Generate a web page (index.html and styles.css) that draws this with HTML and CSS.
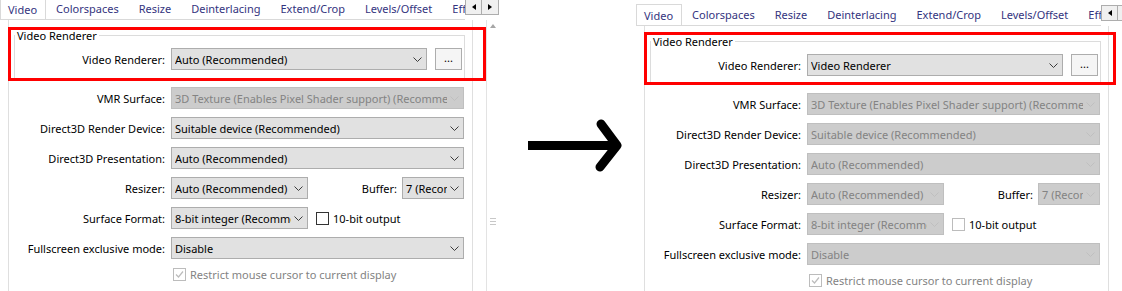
FILE: index.html
```html
<!DOCTYPE html>
<html>
    <head>
        <meta charset="utf-8">
        <title>Video options</title>
        <link rel="stylesheet" href="styles.css">
    </head>
    <body>
    <div class="page">

        <!-- before -->
        <div class="panel panel-left">
            <div class="tabbar">
                <div class="tabs">
                    <div class="tab active">Video</div>
                    <div class="tab">Colorspaces</div>
                    <div class="tab">Resize</div>
                    <div class="tab">Deinterlacing</div>
                    <div class="tab">Extend/Crop</div>
                    <div class="tab">Levels/Offset</div>
                    <div class="tab">Effects</div>
                </div>
                <div class="tab-scroll">
                    <div class="tab-btn"><span class="tri-left"></span></div>
                    <div class="tab-btn"><span class="tri-right"></span></div>
                </div>
            </div>
            <div class="body">
                <div class="content">
                    <fieldset class="group">
                        <legend>Video Renderer</legend>
                        <div class="row row-group">
                            <div class="label label-group">Video Renderer:</div>
                            <div class="combo combo-renderer"><span class="value">Auto (Recommended)</span><svg class="chev" width="9" height="5" viewBox="0 0 9 5"><path d="M0.5 0.5 L4.5 4.5 L8.5 0.5" fill="none" stroke="#3c3c3c"/></svg></div>
                            <div class="dots">...</div>
                        </div>
                    </fieldset>
                    <div class="row">
                        <div class="label">VMR Surface:</div>
                        <div class="combo wide disabled"><span class="value">3D Texture (Enables Pixel Shader support) (Recommended)</span><svg class="chev" width="9" height="5" viewBox="0 0 9 5"><path d="M0.5 0.5 L4.5 4.5 L8.5 0.5" fill="none" stroke="#bfbfbf"/></svg></div>
                    </div>
                    <div class="row">
                        <div class="label">Direct3D Render Device:</div>
                        <div class="combo wide"><span class="value">Suitable device (Recommended)</span><svg class="chev" width="9" height="5" viewBox="0 0 9 5"><path d="M0.5 0.5 L4.5 4.5 L8.5 0.5" fill="none" stroke="#3c3c3c"/></svg></div>
                    </div>
                    <div class="row">
                        <div class="label">Direct3D Presentation:</div>
                        <div class="combo wide"><span class="value">Auto (Recommended)</span><svg class="chev" width="9" height="5" viewBox="0 0 9 5"><path d="M0.5 0.5 L4.5 4.5 L8.5 0.5" fill="none" stroke="#3c3c3c"/></svg></div>
                    </div>
                    <div class="row">
                        <div class="label">Resizer:</div>
                        <div class="combo short"><span class="value">Auto (Recommended)</span><svg class="chev" width="9" height="5" viewBox="0 0 9 5"><path d="M0.5 0.5 L4.5 4.5 L8.5 0.5" fill="none" stroke="#3c3c3c"/></svg></div>
                        <div class="spacer"></div>
                        <div class="label-inline">Buffer:</div>
                        <div class="combo tiny"><span class="value">7 (Recommended)</span><svg class="chev" width="9" height="5" viewBox="0 0 9 5"><path d="M0.5 0.5 L4.5 4.5 L8.5 0.5" fill="none" stroke="#3c3c3c"/></svg></div>
                    </div>
                    <div class="row">
                        <div class="label">Surface Format:</div>
                        <div class="combo short"><span class="value">8-bit integer (Recommended)</span><svg class="chev" width="9" height="5" viewBox="0 0 9 5"><path d="M0.5 0.5 L4.5 4.5 L8.5 0.5" fill="none" stroke="#3c3c3c"/></svg></div>
                        <div class="check"></div>
                        <div class="check-label">10-bit output</div>
                    </div>
                    <div class="row">
                        <div class="label">Fullscreen exclusive mode:</div>
                        <div class="combo wide"><span class="value">Disable</span><svg class="chev" width="9" height="5" viewBox="0 0 9 5"><path d="M0.5 0.5 L4.5 4.5 L8.5 0.5" fill="none" stroke="#3c3c3c"/></svg></div>
                    </div>
                    <div class="row row-check">
                        <div class="check check-restrict disabled"><svg width="11" height="11" viewBox="0 0 11 11"><path d="M2 5.5 L4.5 8 L9 2.5" fill="none" stroke="#bcbcbc" stroke-width="1.2"/></svg></div>
                        <div class="check-label muted">Restrict mouse cursor to current display</div>
                    </div>
                </div>
                <div class="scrollbar">
                    <div class="scroll-up"></div>
                    <div class="thumb"><div class="grip"></div></div>
                </div>
            </div>
            <div class="highlight highlight-left"></div>
        </div>

        <div class="middle">
            <svg width="136" height="291" viewBox="0 0 136 291">
                <line x1="28" y1="145.5" x2="114" y2="145.5" stroke="#000" stroke-width="9"/>
                <polyline points="101,124 117,145.5 100,167" fill="none" stroke="#000" stroke-width="9" stroke-linecap="round" stroke-linejoin="round"/>
            </svg>
        </div>

        <!-- after -->
        <div class="panel panel-right">
            <div class="tabbar">
                <div class="tabs">
                    <div class="tab active">Video</div>
                    <div class="tab">Colorspaces</div>
                    <div class="tab">Resize</div>
                    <div class="tab">Deinterlacing</div>
                    <div class="tab">Extend/Crop</div>
                    <div class="tab">Levels/Offset</div>
                    <div class="tab">Effects</div>
                </div>
                <div class="tab-scroll">
                    <div class="tab-btn"><span class="tri-left"></span></div>
                    <div class="tab-btn"><span class="tri-right"></span></div>
                </div>
            </div>
            <div class="body">
                <div class="content">
                    <fieldset class="group">
                        <legend>Video Renderer</legend>
                        <div class="row row-group">
                            <div class="label label-group">Video Renderer:</div>
                            <div class="combo combo-renderer"><span class="value">Video Renderer</span><svg class="chev" width="9" height="5" viewBox="0 0 9 5"><path d="M0.5 0.5 L4.5 4.5 L8.5 0.5" fill="none" stroke="#3c3c3c"/></svg></div>
                            <div class="dots">...</div>
                        </div>
                    </fieldset>
                    <div class="row">
                        <div class="label">VMR Surface:</div>
                        <div class="combo wide disabled"><span class="value">3D Texture (Enables Pixel Shader support) (Recommended)</span><svg class="chev" width="9" height="5" viewBox="0 0 9 5"><path d="M0.5 0.5 L4.5 4.5 L8.5 0.5" fill="none" stroke="#bfbfbf"/></svg></div>
                    </div>
                    <div class="row">
                        <div class="label">Direct3D Render Device:</div>
                        <div class="combo wide disabled"><span class="value">Suitable device (Recommended)</span><svg class="chev" width="9" height="5" viewBox="0 0 9 5"><path d="M0.5 0.5 L4.5 4.5 L8.5 0.5" fill="none" stroke="#bfbfbf"/></svg></div>
                    </div>
                    <div class="row">
                        <div class="label">Direct3D Presentation:</div>
                        <div class="combo wide disabled"><span class="value">Auto (Recommended)</span><svg class="chev" width="9" height="5" viewBox="0 0 9 5"><path d="M0.5 0.5 L4.5 4.5 L8.5 0.5" fill="none" stroke="#bfbfbf"/></svg></div>
                    </div>
                    <div class="row">
                        <div class="label">Resizer:</div>
                        <div class="combo short disabled"><span class="value">Auto (Recommended)</span><svg class="chev" width="9" height="5" viewBox="0 0 9 5"><path d="M0.5 0.5 L4.5 4.5 L8.5 0.5" fill="none" stroke="#bfbfbf"/></svg></div>
                        <div class="spacer"></div>
                        <div class="label-inline">Buffer:</div>
                        <div class="combo tiny disabled"><span class="value">7 (Recommended)</span><svg class="chev" width="9" height="5" viewBox="0 0 9 5"><path d="M0.5 0.5 L4.5 4.5 L8.5 0.5" fill="none" stroke="#bfbfbf"/></svg></div>
                    </div>
                    <div class="row">
                        <div class="label">Surface Format:</div>
                        <div class="combo short disabled"><span class="value">8-bit integer (Recommended)</span><svg class="chev" width="9" height="5" viewBox="0 0 9 5"><path d="M0.5 0.5 L4.5 4.5 L8.5 0.5" fill="none" stroke="#bfbfbf"/></svg></div>
                        <div class="check disabled"></div>
                        <div class="check-label">10-bit output</div>
                    </div>
                    <div class="row">
                        <div class="label">Fullscreen exclusive mode:</div>
                        <div class="combo wide disabled"><span class="value">Disable</span><svg class="chev" width="9" height="5" viewBox="0 0 9 5"><path d="M0.5 0.5 L4.5 4.5 L8.5 0.5" fill="none" stroke="#bfbfbf"/></svg></div>
                    </div>
                    <div class="row row-check">
                        <div class="check check-restrict disabled"><svg width="11" height="11" viewBox="0 0 11 11"><path d="M2 5.5 L4.5 8 L9 2.5" fill="none" stroke="#bcbcbc" stroke-width="1.2"/></svg></div>
                        <div class="check-label muted">Restrict mouse cursor to current display</div>
                    </div>
                </div>
                <div class="scrollbar">
                    <div class="scroll-up"></div>
                    <div class="thumb"><div class="grip"></div></div>
                </div>
            </div>
            <div class="highlight highlight-right"></div>
        </div>

    </div>
    </body>
</html>
```

FILE: styles.css
```css
body{
    margin: 0;
    background: #fff;
    color: #000;
    font-family: "Noto Sans", "DejaVu Sans", sans-serif;
    font-size: 11px;
    line-height: 15px;
}
.page{
    display: flex;
    width: 1122px;
    height: 291px;
    overflow: hidden;
}
.panel{
    position: relative;
    flex: none;
    width: 500px;
}
.panel-left{
    margin-top: -2px;
}
.panel-right{
    margin-top: 4px;
}
.middle{
    flex: none;
    width: 136px;
}
.middle svg{
    display: block;
}

/* tabs */
.tabbar{
    display: flex;
    height: 22px;
}
.tabs{
    display: flex;
    width: 465px;
    height: 21px;
    border-bottom: 1px solid #d9d9d9;
    overflow: hidden;
    white-space: nowrap;
}
.tab{
    padding: 0 10px;
    line-height: 21px;
    color: #343480;
}
.tab.active{
    box-sizing: border-box;
    height: 22px;
    padding: 0 8px 0 7px;
    border: 1px solid #d9d9d9;
    border-bottom: none;
    background: #fff;
    line-height: 21px;
}
.tab-scroll{
    display: flex;
    margin-top: 1px;
}
.tab-btn{
    box-sizing: border-box;
    width: 17px;
    height: 16px;
    border: 1px solid #adadad;
    background: #f0f0f0;
    display: flex;
    align-items: center;
    justify-content: center;
}
.tab-btn + .tab-btn{
    border-left: none;
}
.tri-left{
    border-top: 3px solid transparent;
    border-bottom: 3px solid transparent;
    border-right: 4px solid #000;
}
.tri-right{
    border-top: 3px solid transparent;
    border-bottom: 3px solid transparent;
    border-left: 4px solid #000;
}

/* page body */
.body{
    display: flex;
    height: 300px;
}
.content{
    width: 463px;
    margin-left: 8px;
    padding-top: 8px;
    border-left: 1px solid #dfdfdf;
    border-right: 1px solid #dfdfdf;
}
.scrollbar{
    position: relative;
    width: 12px;
    margin-left: 13px;
    border-left: 1px solid #e3e3e3;
}
.scroll-up{
    margin: 4px 0 0 3px;
    width: 0;
    border-left: 3px solid transparent;
    border-right: 3px solid transparent;
    border-bottom: 4px solid #a6a6a6;
}
.thumb{
    margin-top: 190px;
}
.grip{
    margin-left: 3px;
    width: 6px;
    height: 5px;
    border-top: 1px solid #c8c8c8;
    border-bottom: 1px solid #c8c8c8;
    background: linear-gradient(#fff 2px, #c8c8c8 2px, #c8c8c8 3px, #fff 3px);
}

/* group box */
.group{
    margin: 0 7px 0 5px;
    padding: 5px 2px 8px 0;
    border: 1px solid #dcdcdc;
    min-width: 0;
}
.group legend{
    padding: 0 2px;
    margin-left: 0;
    line-height: 15px;
}

/* rows */
.row{
    display: flex;
    align-items: center;
    height: 22px;
    margin-top: 8px;
    padding-right: 8px;
}
.row-group{
    margin-top: 0;
    padding-right: 0;
}
.label{
    flex: none;
    width: 156px;
    margin-right: 6px;
    text-align: right;
    white-space: nowrap;
}
.label-group{
    width: 150px;
}
.label-inline{
    margin-right: 5px;
}
.spacer{
    flex: 1;
}
.combo{
    box-sizing: border-box;
    display: flex;
    align-items: center;
    flex: none;
    min-width: 0;
    height: 22px;
    padding-left: 3px;
    border: 1px solid #adadad;
    background: #e1e1e1;
    white-space: nowrap;
}
.combo .value{
    flex: 1;
    min-width: 0;
    overflow: hidden;
}
.combo .chev{
    flex: none;
    margin: 0 4px 0 3px;
}
.combo.disabled{
    border-color: #bfbfbf;
    background: #cccccc;
    color: #838383;
}
.combo-renderer{
    width: 256px;
}
.wide{
    flex: 1 1 0;
}
.short{
    width: 137px;
}
.tiny{
    width: 62px;
}
.dots{
    box-sizing: border-box;
    width: 28px;
    height: 22px;
    margin-left: 8px;
    border: 1px solid #adadad;
    background: #f5f5f5;
    text-align: center;
    line-height: 18px;
}

/* checkboxes */
.check{
    box-sizing: border-box;
    flex: none;
    width: 13px;
    height: 13px;
    margin-left: 8px;
    border: 1px solid #333;
    background: #fff;
}
.check.disabled{
    border-color: #bcbcbc;
}
.check svg{
    display: block;
}
.check-label{
    margin-left: 4px;
    white-space: nowrap;
}
.muted{
    color: #838383;
}
.row-check{
    height: 15px;
}
.check-restrict{
    margin-left: 164px;
}

/* red marker round the renderer group */
.highlight{
    position: absolute;
    border: 3px solid #f00;
    box-sizing: border-box;
}
.highlight-left{
    left: 8px;
    top: 29px;
    width: 478px;
    height: 54px;
}
.highlight-right{
    left: 8px;
    top: 28px;
    width: 472px;
    height: 53px;
}
```
